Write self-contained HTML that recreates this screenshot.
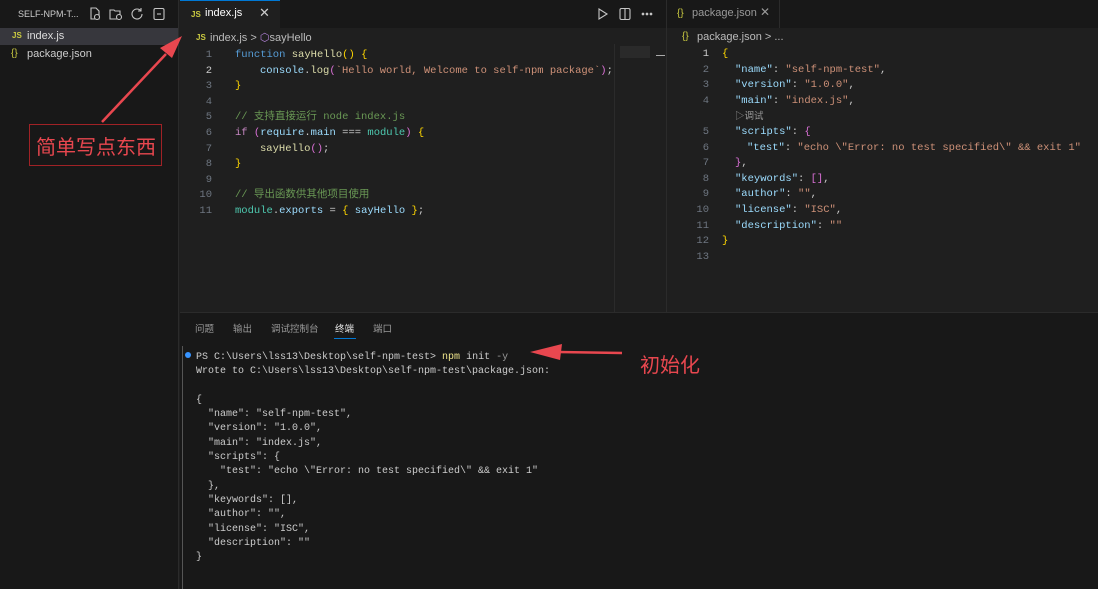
<!DOCTYPE html>
<html style="overflow:hidden;width:1098px;height:589px"><head><meta charset="utf-8"><style>
*{margin:0;padding:0;box-sizing:border-box}
body{width:1098px;height:589px;background:#1f1f1f;position:relative;overflow:hidden;font-family:"Liberation Sans","Noto Sans CJK SC",sans-serif;color:#ccc}
.abs{position:absolute;white-space:nowrap}
.mono{font-family:"Liberation Mono","Noto Sans CJK SC",monospace}
.mono>div{white-space:pre;position:relative}
.side{left:0;top:0;width:179px;height:589px;background:#181818;border-right:1px solid #2b2b2b}
.tabbar{top:0;height:28px;background:#181818}
.ln{color:#6e7681;text-align:right;width:26px}
.k{color:#569cd6}.f{color:#dcdcaa}.s{color:#ce9178}.v{color:#9cdcfe}.c{color:#6a9955}.y{color:#ffd700}.p{color:#da70d6}.t{color:#4ec9b0}.kc{color:#c586c0}
.code>div{height:15.6px;line-height:15.6px;font-size:10.5px}
.code .abs{top:0}
.term>div{height:14.3px;line-height:14.3px;font-size:10px;color:#ccc}
</style></head><body>
<div class="abs side">
 <div class="abs" style="left:18px;top:9px;font-size:9px;color:#ccc">SELF-NPM-T...</div>
 <svg class="abs" style="left:88px;top:7px" width="90" height="14" viewBox="0 0 90 14" fill="none" stroke="#c5c5c5" stroke-width="1.1">
  <path d="M3 1h5l3 3v8H3z"/><circle cx="9" cy="10" r="2.5" fill="#181818"/>
  <path d="M22 3h4l1 1h5v8H22z"/><circle cx="31" cy="10" r="2.5" fill="#181818"/>
  <path d="M53 4a5 5 0 1 0 1 3M53 1v3h-3"/>
  <rect x="66" y="1.5" width="10" height="11" rx="1.5"/><path d="M69 7h4"/>
 </svg>
 <div class="abs" style="left:0;top:28px;width:178px;height:17px;background:#37373d"></div>
 <div class="abs" style="left:12px;top:31px;font-size:8px;font-weight:bold;color:#cbcb41">JS</div>
 <div class="abs" style="left:27px;top:30px;font-size:11px;color:#ddd">index.js</div>
 <div class="abs" style="left:11px;top:48px;font-size:10px;color:#cbcb41">{}</div>
 <div class="abs" style="left:27px;top:48px;font-size:11px;color:#ccc">package.json</div>
</div>
<div class="abs tabbar" style="left:180px;width:486px"></div>
<div class="abs" style="left:180px;top:0;width:100px;height:28px;background:#1f1f1f;border-top:1px solid #0078d4"></div>
<div class="abs" style="left:191px;top:10px;font-size:8px;font-weight:bold;color:#cbcb41">JS</div>
<div class="abs" style="left:205px;top:7px;font-size:11px;color:#fff">index.js</div>
<div class="abs" style="left:259px;top:5px;font-size:13px;color:#ccc">✕</div>
<svg class="abs" style="left:596px;top:7px" width="60" height="14" fill="none" stroke="#c5c5c5" stroke-width="1.1"><path d="M3 2l8 5-8 5z"/><rect x="24" y="1.5" width="10" height="11" rx="1.5"/><path d="M29 1.5v11"/><circle cx="47" cy="7" r=".8" fill="#c5c5c5"/><circle cx="51" cy="7" r=".8" fill="#c5c5c5"/><circle cx="55" cy="7" r=".8" fill="#c5c5c5"/></svg>
<div class="abs" style="left:196px;top:33px;font-size:8px;font-weight:bold;color:#cbcb41">JS</div>
<div class="abs" style="left:210px;top:31px;font-size:11px;color:#bbb">index.js &gt; <span style="color:#b180d7">⬡</span>sayHello</div>
<div class="abs code mono" style="left:180px;top:48px;width:434px"><div><span class="ln abs" style="left:6px">1</span><span class="abs" style="left:55px"><span class="k">function</span> <span class="f">sayHello</span><span class="y">()</span> <span class="y">{</span></span></div><div><span class="ln abs" style="left:6px;color:#ccc">2</span><span class="abs" style="left:80px"><span class="v">console</span>.<span class="f">log</span><span class="p">(</span><span class="s">`Hello world, Welcome to self-npm package`</span><span class="p">)</span>;</span></div><div><span class="ln abs" style="left:6px">3</span><span class="abs y" style="left:55px">}</span></div><div><span class="ln abs" style="left:6px">4</span></div><div><span class="ln abs" style="left:6px">5</span><span class="abs c" style="left:55px">// 支持直接运行 node index.js</span></div><div><span class="ln abs" style="left:6px">6</span><span class="abs" style="left:55px"><span class="kc">if</span> <span class="p">(</span><span class="v">require</span>.<span class="v">main</span> === <span class="t">module</span><span class="p">)</span> <span class="y">{</span></span></div><div><span class="ln abs" style="left:6px">7</span><span class="abs" style="left:80px"><span class="f">sayHello</span><span class="p">()</span>;</span></div><div><span class="ln abs" style="left:6px">8</span><span class="abs y" style="left:55px">}</span></div><div><span class="ln abs" style="left:6px">9</span></div><div><span class="ln abs" style="left:6px">10</span><span class="abs c" style="left:55px">// 导出函数供其他项目使用</span></div><div><span class="ln abs" style="left:6px">11</span><span class="abs" style="left:55px"><span class="t">module</span>.<span class="v">exports</span> = <span class="y">{</span> <span class="v">sayHello</span> <span class="y">}</span>;</span></div></div>
<div class="abs" style="left:614px;top:44px;width:52px;height:268px;border-left:1px solid #2b2b2b"></div>
<div class="abs" style="left:620px;top:46px;width:30px;height:12px;background:#2a2a2a"></div>
<div class="abs" style="left:656px;top:55px;width:9px;height:1px;background:#aaa"></div>
<div class="abs" style="left:666px;top:0;width:1px;height:312px;background:#2b2b2b"></div>
<div class="abs tabbar" style="left:667px;width:431px"></div>
<div class="abs" style="left:667px;top:0;width:113px;height:28px;background:#181818;border-right:1px solid #2b2b2b"></div>
<div class="abs" style="left:677px;top:8px;font-size:10px;color:#cbcb41">{}</div>
<div class="abs" style="left:692px;top:7px;font-size:11px;color:#999">package.json</div>
<div class="abs" style="left:760px;top:5px;font-size:12px;color:#999">✕</div>
<div class="abs" style="left:682px;top:31px;font-size:10px;color:#cbcb41">{}</div>
<div class="abs" style="left:697px;top:31px;font-size:11px;color:#bbb">package.json &gt; ...</div>
<div class="abs code mono" style="left:667px;top:47px;width:431px"><div><span class="ln abs" style="left:18px;width:24px;color:#ccc">1</span><span class="abs y" style="left:55px">{</span></div><div><span class="ln abs" style="left:18px;width:24px">2</span><span class="abs" style="left:68px"><span class="v">"name"</span>: <span class="s">"self-npm-test"</span>,</span></div><div><span class="ln abs" style="left:18px;width:24px">3</span><span class="abs" style="left:68px"><span class="v">"version"</span>: <span class="s">"1.0.0"</span>,</span></div><div><span class="ln abs" style="left:18px;width:24px">4</span><span class="abs" style="left:68px"><span class="v">"main"</span>: <span class="s">"index.js"</span>,</span></div><div><span class="abs" style="left:68px;font-size:9.5px;color:#999;font-family:'Liberation Sans','Noto Sans CJK SC',sans-serif">▷调试</span></div><div><span class="ln abs" style="left:18px;width:24px">5</span><span class="abs" style="left:68px"><span class="v">"scripts"</span>: <span class="p">{</span></span></div><div><span class="ln abs" style="left:18px;width:24px">6</span><span class="abs" style="left:80px"><span class="v">"test"</span>: <span class="s">"echo \"Error: no test specified\" &amp;&amp; exit 1"</span></span></div><div><span class="ln abs" style="left:18px;width:24px">7</span><span class="abs" style="left:68px"><span class="p">}</span>,</span></div><div><span class="ln abs" style="left:18px;width:24px">8</span><span class="abs" style="left:68px"><span class="v">"keywords"</span>: <span class="p">[]</span>,</span></div><div><span class="ln abs" style="left:18px;width:24px">9</span><span class="abs" style="left:68px"><span class="v">"author"</span>: <span class="s">""</span>,</span></div><div><span class="ln abs" style="left:18px;width:24px">10</span><span class="abs" style="left:68px"><span class="v">"license"</span>: <span class="s">"ISC"</span>,</span></div><div><span class="ln abs" style="left:18px;width:24px">11</span><span class="abs" style="left:68px"><span class="v">"description"</span>: <span class="s">""</span></span></div><div><span class="ln abs" style="left:18px;width:24px">12</span><span class="abs y" style="left:55px">}</span></div><div><span class="ln abs" style="left:18px;width:24px">13</span></div></div>
<div class="abs" style="left:180px;top:312px;width:918px;height:277px;background:#181818;border-top:1px solid #2b2b2b"></div>
<div class="abs" style="left:195px;top:321px;font-size:9.5px;color:#999"><span class="abs" style="left:0">问题</span><span class="abs" style="left:38px">输出</span><span class="abs" style="left:76px">调试控制台</span><span class="abs" style="left:140px;color:#e7e7e7">终端</span><span class="abs" style="left:178px">端口</span></div>
<div class="abs" style="left:334px;top:338px;width:22px;height:1px;background:#0078d4"></div>
<div class="abs" style="left:182px;top:346px;width:1px;height:243px;background:#555"></div>
<div class="abs" style="left:185px;top:352px;width:6px;height:6px;border-radius:50%;background:#3794ff"></div>
<div class="abs term mono" style="left:196px;top:351px;width:600px"><div>PS C:\Users\lss13\Desktop\self-npm-test&gt; <span style="color:#f0e68c">npm</span> init <span style="color:#999">-y</span></div><div>Wrote to C:\Users\lss13\Desktop\self-npm-test\package.json:</div><div></div><div>{</div><div>  "name": "self-npm-test",</div><div>  "version": "1.0.0",</div><div>  "main": "index.js",</div><div>  "scripts": {</div><div>    "test": "echo \"Error: no test specified\" &amp;&amp; exit 1"</div><div>  },</div><div>  "keywords": [],</div><div>  "author": "",</div><div>  "license": "ISC",</div><div>  "description": ""</div><div>}</div></div>
<svg class="abs" style="left:0;top:0" width="1098" height="589">
 <path d="M102 122L166 54" stroke="#e8474f" stroke-width="2.5"/>
 <path d="M182 36L160 48L172 58Z" fill="#e8474f"/>
 <path d="M622 353L558 352" stroke="#e8474f" stroke-width="2.5"/>
 <path d="M530 352L562 344L560 360Z" fill="#e8474f"/>
</svg>
<div class="abs" style="left:29px;top:124px;width:133px;height:42px;border:1px solid #a02226"></div>
<div class="abs" style="left:36px;top:131px;font-size:20px;color:#e8474f">简单写点东西</div>
<div class="abs" style="left:640px;top:349px;font-size:20px;color:#e8474f">初始化</div>
</body></html>
